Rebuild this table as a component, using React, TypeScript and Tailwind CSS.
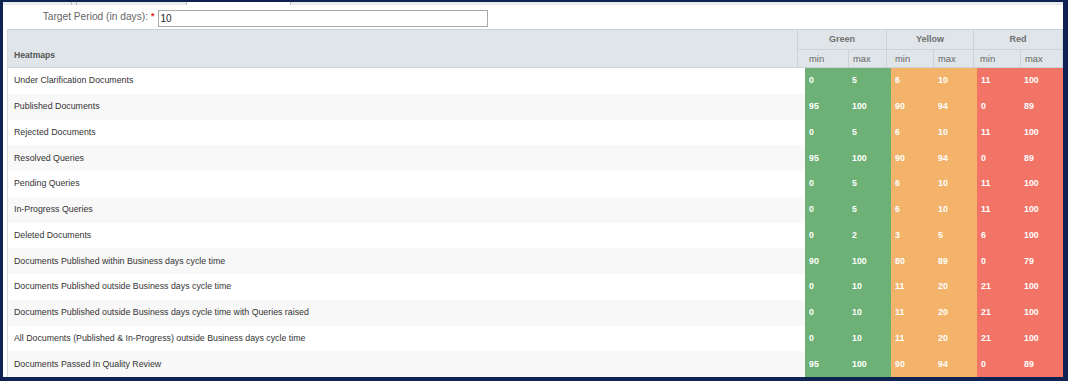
const rows: [string, number[]][] = [
  ['Under Clarification Documents', [0, 5, 6, 10, 11, 100]],
  ['Published Documents', [95, 100, 90, 94, 0, 89]],
  ['Rejected Documents', [0, 5, 6, 10, 11, 100]],
  ['Resolved Queries', [95, 100, 90, 94, 0, 89]],
  ['Pending Queries', [0, 5, 6, 10, 11, 100]],
  ['In-Progress Queries', [0, 5, 6, 10, 11, 100]],
  ['Deleted Documents', [0, 2, 3, 5, 6, 100]],
  ['Documents Published within Business days cycle time', [90, 100, 80, 89, 0, 79]],
  ['Documents Published outside Business days cycle time', [0, 10, 11, 20, 21, 100]],
  ['Documents Published outside Business days cycle time with Queries raised', [0, 10, 11, 20, 21, 100]],
  ['All Documents (Published & In-Progress) outside Business days cycle time', [0, 10, 11, 20, 21, 100]],
  ['Documents Passed In Quality Review', [95, 100, 90, 94, 0, 89]],
];

const cellBg = ['bg-[#6db176]', 'bg-[#6db176]', 'bg-[#f3b36b]', 'bg-[#f3b36b]', 'bg-[#f27466]', 'bg-[#f27466]'];

function HeaderGroup({label, minW, maxW, minPl}: {label: string; minW: string; maxW: string; minPl: string}) {
  return (
    <div className="flex flex-col border-l border-[#ccd3d8]">
      <div className="h-[20px] flex items-center justify-center border-b border-[#ccd3d8] font-bold text-[9px] text-[#707070]">
        {label}
      </div>
      <div className="flex h-[18px] items-center text-[9.4px] text-[#666]">
        <div className={`${minW} ${minPl} h-full flex items-center`}>min</div>
        <div className={`${maxW} h-full flex items-center pl-[4px] border-l border-[#ccd3d8]`}>max</div>
      </div>
    </div>
  );
}

export default function App() {
  return (
    <div className="w-[1068px] h-[381px] bg-[#0e2352] pt-[2px] pl-[3px] pr-[5px] pb-[4px] font-['Liberation_Sans',Arial,sans-serif]">
      <div className="w-full h-full bg-white flex flex-col overflow-hidden">
        {/* tab strip remnant */}
        <div className="h-[3px] flex bg-[#e9ecef] shrink-0">
          <div className="w-[69px] border-r border-[#b9c0c7]" />
          <div className="w-[4px]" />
          <div className="w-[111px] border-l border-r border-[#b9c0c7]" />
          <div className="w-[103px] bg-white" />
          <div className="flex-1 border-l border-[#b9c0c7]" />
        </div>

        {/* target period */}
        <div className="h-[24px] flex items-center shrink-0">
          <div className="w-[145px] text-right text-[10.2px] text-[#666]">Target Period (in days):</div>
          <span className="text-[9px] font-bold text-[#e8202a] ml-[3px] mr-[3px] -mt-[1px]">*</span>
          <div className="w-[330px] h-[17px] border border-[#a9a9a9] flex items-center pl-[2px] text-[10px] text-[#222] mt-[3px]">
            10
          </div>
        </div>

        {/* table */}
        <div className="ml-[4px] flex-1 flex flex-col border-l border-[#d5d9dd]">
          <div className="h-[39px] bg-[#e0e5e9] flex border-t border-b border-[#c9d0d6] shrink-0">
            <div className="w-[789px] flex items-end pb-[5px] pl-[6px] font-bold text-[8.6px] text-[#555]">Heatmaps</div>
            <div className="w-[89px]">
              <HeaderGroup label="Green" minW="w-[50px]" maxW="w-[38px]" minPl="pl-[11px]" />
            </div>
            <div className="w-[87px]">
              <HeaderGroup label="Yellow" minW="w-[46px]" maxW="w-[40px]" minPl="pl-[8px]" />
            </div>
            <div className="w-[89px]">
              <HeaderGroup label="Red" minW="w-[46px]" maxW="w-[42px]" minPl="pl-[6px]" />
            </div>
            <div className="flex-1 border-l border-[#ccd3d8]" />
          </div>

          {rows.map(([label, vals], i) => (
            <div key={label} className={`h-[25.75px] flex ${i % 2 === 1 ? 'bg-[#f8f8f8]' : 'bg-white'}`}>
              <div className="w-[797px] flex items-center pl-[6px] text-[8.8px] text-[#333]">{label}</div>
              {vals.map((v, j) => (
                <div
                  key={j}
                  className={`w-[43px] h-full flex items-center pl-[4px] font-bold text-[8.8px] text-white ${cellBg[j]}`}
                >
                  {v}
                </div>
              ))}
              <div className="flex-1 bg-white" />
            </div>
          ))}
        </div>
      </div>
    </div>
  );
}
